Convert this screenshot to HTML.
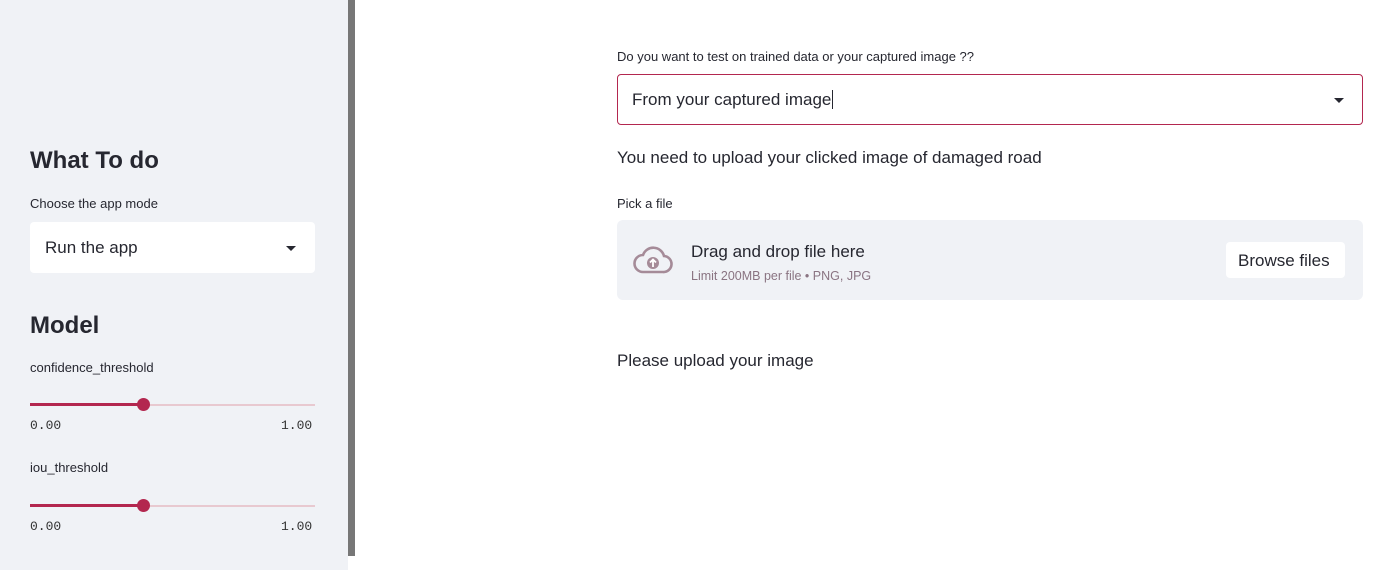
<!DOCTYPE html>
<html><head><style>
*{box-sizing:border-box;margin:0;padding:0}
body{width:1400px;height:570px;overflow:hidden;background:#fff;font-family:"Liberation Sans",sans-serif;color:#262730;position:relative}
.side{position:absolute;left:0;top:0;width:348px;height:570px;background:#f0f2f6}
.sb{position:absolute;left:348px;top:0;width:7px;height:556px;background:#777}
.abs{position:absolute;white-space:nowrap}
h2{font-size:24px;font-weight:bold;color:#262730}
.lab{font-size:13px}
.mono{font-family:"Liberation Mono",monospace;font-size:13px;color:#333}
.sel{position:absolute;background:#fff;border-radius:4px}
.caret{position:absolute;width:0;height:0;border-left:5px solid transparent;border-right:5px solid transparent;border-top:5px solid #262730}
.track{position:absolute;height:2px;background:#e8c9d0}
.fill{position:absolute;height:3px;background:#b3274f}
.knob{position:absolute;width:13px;height:13px;border-radius:50%;background:#b3274f}
</style></head><body>
<div class="side"></div><div class="sb"></div>
<h2 class="abs" style="left:30px;top:147px">What To do</h2>
<div class="abs lab" style="left:30px;top:196px">Choose the app mode</div>
<div class="sel" style="left:30px;top:222px;width:285px;height:51px"></div>
<div class="abs" style="left:45px;top:238px;font-size:17px">Run the app</div>
<div class="caret" style="left:286px;top:246px"></div>
<h2 class="abs" style="left:30px;top:312px">Model</h2>
<div class="abs lab" style="left:30px;top:360px">confidence_threshold</div>
<div class="track" style="left:30px;top:404px;width:285px"></div>
<div class="fill" style="left:30px;top:403px;width:114px"></div>
<div class="knob" style="left:137px;top:398px"></div>
<div class="abs mono" style="left:30px;top:418px">0.00</div>
<div class="abs mono" style="left:281px;top:418px">1.00</div>
<div class="abs lab" style="left:30px;top:460px">iou_threshold</div>
<div class="track" style="left:30px;top:505px;width:285px"></div>
<div class="fill" style="left:30px;top:504px;width:114px"></div>
<div class="knob" style="left:137px;top:499px"></div>
<div class="abs mono" style="left:30px;top:519px">0.00</div>
<div class="abs mono" style="left:281px;top:519px">1.00</div>

<div class="abs lab" style="left:617px;top:49px">Do you want to test on trained data or your captured image ??</div>
<div class="sel" style="left:617px;top:74px;width:746px;height:51px;border:1px solid #b3274f;background:#fff"></div>
<div class="abs" style="left:632px;top:90px;font-size:17px">From your captured image<span style="border-left:1px solid #262730;margin-left:1px">&nbsp;</span></div>
<div class="caret" style="left:1334px;top:98px"></div>
<div class="abs" style="left:617px;top:148px;font-size:17px">You need to upload your clicked image of damaged road</div>
<div class="abs lab" style="left:617px;top:196px">Pick a file</div>
<div class="sel" style="left:617px;top:220px;width:746px;height:80px;background:#f0f2f6;border-radius:6px"></div>
<svg class="abs" style="left:633px;top:244px" width="40" height="32" viewBox="0 0 40 32"><path d="M10 28 H30 A8 8 0 0 0 31 12 A11 11 0 0 0 10 11 A8.5 8.5 0 0 0 10 28 Z" fill="none" stroke="#a58b98" stroke-width="2.6"/><circle cx="20" cy="19" r="6" fill="#a58b98"/><path d="M20 23 V16 M17 18.5 L20 15.5 L23 18.5" stroke="#fff" stroke-width="1.8" fill="none"/></svg>
<div class="abs" style="left:691px;top:242px;font-size:17px">Drag and drop file here</div>
<div class="abs" style="left:691px;top:269px;font-size:12.5px;color:#8a7482">Limit 200MB per file • PNG, JPG</div>
<div class="sel" style="left:1226px;top:242px;width:119px;height:36px;border-radius:4px"></div>
<div class="abs" style="left:1238px;top:251px;font-size:17px">Browse files</div>
<div class="abs" style="left:617px;top:351px;font-size:17px">Please upload your image</div>
</body></html>
